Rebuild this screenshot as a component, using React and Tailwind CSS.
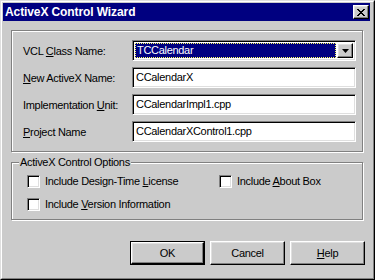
const FONT = { fontFamily: '"Liberation Sans", Arial, sans-serif' };

const SUNKEN =
  "border border-t-[#808080] border-l-[#808080] border-b-white border-r-white shadow-[inset_1px_1px_0_#000,inset_-1px_-1px_0_#dfdfdf]";
const RAISED =
  "border border-t-white border-l-white border-b-black border-r-black shadow-[inset_-1px_-1px_0_#808080,inset_1px_1px_0_#dfdfdf]";
const ETCHED =
  "border border-[#808080] shadow-[inset_1px_1px_0_#fff,1px_1px_0_#fff]";

const FIELDS = [
  { pre: "", key: "N", rest: "ew ActiveX Name:", value: "CCalendarX" },
  { pre: "Implementation ", key: "U", rest: "nit:", value: "CCalendarImpl1.cpp" },
  { pre: "", key: "P", rest: "roject Name", value: "CCalendarXControl1.cpp" },
];

function Label({ children }) {
  return <div className="w-[109px] shrink-0 whitespace-nowrap pt-[2px]">{children}</div>;
}

function Check({ children }) {
  return (
    <div className="flex items-center gap-[5px] leading-[13px]">
      <div className={`h-[13px] w-[13px] bg-white ${SUNKEN}`} />
      <span>{children}</span>
    </div>
  );
}

function Btn({ def, children }) {
  if (def)
    return (
      <div className="h-[24px] w-[75px] border border-black">
        <div className={`flex h-full items-center justify-center ${RAISED}`}>{children}</div>
      </div>
    );
  return (
    <div className={`flex h-[24px] w-[75px] items-center justify-center ${RAISED}`}>
      {children}
    </div>
  );
}

export default function App() {
  return (
    <div
      style={FONT}
      className="h-[280px] w-[375px] border border-t-[#dfdfdf] border-l-[#dfdfdf] border-r-black border-b-black text-[11px] tracking-[-0.3px] text-black"
    >
      <div className="flex h-full flex-col border border-t-white border-l-white border-r-[#808080] border-b-[#808080] bg-[#cbcbcb] p-[1px]">
        {/* title */}
        <div className="mr-[2px] flex h-[18px] items-center justify-between bg-[#000080] pl-[2px] pr-[1px]">
          <span className="text-[12px] font-bold tracking-[-0.1px] text-white">ActiveX Control Wizard</span>
          <div className={`flex h-[14px] w-[16px] items-center justify-center bg-[#cbcbcb] ${RAISED}`}>
            <svg width="8" height="7" viewBox="0 0 8 7">
              <path d="M0 0h2v1h1v1h2V1h1V0h2v1H7v1H6v1H5v1h1v1h1v1h1v1H6V6H5V5H3v1H2v1H0V6h1V5h1V4h1V3H2V2H1V1H0z" fill="#000" />
            </svg>
          </div>
        </div>

        {/* class / names group */}
        <div className={`ml-[8px] mt-[9px] w-[352px] pl-[11px] pt-[9px] pb-[9px] ${ETCHED}`}>
          <div className="flex h-[21px] items-center">
            <Label>
              VCL <u>C</u>lass Name:
            </Label>
            <div className={`flex h-[21px] w-[224px] p-[2px] ${SUNKEN} bg-white`}>
              <div className="flex flex-1 items-center border border-dotted border-[#ffff60] bg-[#000080] pl-[1px] text-white">
                TCCalendar
              </div>
              <div className={`ml-[1px] flex w-[16px] items-center justify-center bg-[#cbcbcb] ${RAISED}`}>
                <svg width="7" height="4" viewBox="0 0 7 4">
                  <path d="M0 0h7L3.5 4z" fill="#000" />
                </svg>
              </div>
            </div>
          </div>
          {FIELDS.map((f) => (
            <div key={f.value} className="mt-[6px] flex h-[21px] items-center">
              <Label>
                {f.pre}
                <u>{f.key}</u>
                {f.rest}
              </Label>
              <div className={`flex h-[21px] w-[224px] items-center bg-white pl-[3px] ${SUNKEN}`}>
                {f.value}
              </div>
            </div>
          ))}
        </div>

        {/* options group */}
        <div className={`relative ml-[8px] mt-[10px] w-[352px] pl-[15px] pt-[12px] pb-[8px] ${ETCHED}`}>
          <span className="absolute -top-[8px] left-[7px] bg-[#cbcbcb] px-[1px] leading-[14px]">ActiveX Control Options</span>
          <div className="flex">
            <div className="w-[192px]">
              <Check>
                Include Design-Time <u>L</u>icense
              </Check>
            </div>
            <Check>
              Include <u>A</u>bout Box
            </Check>
          </div>
          <div className="mt-[10px]">
            <Check>
              Include <u>V</u>ersion Information
            </Check>
          </div>
        </div>

        {/* buttons */}
        <div className="mt-[21px] flex justify-end gap-[5px] pr-[7px]">
          <Btn def>OK</Btn>
          <Btn>Cancel</Btn>
          <Btn>
            <span>
              <u>H</u>elp
            </span>
          </Btn>
        </div>
      </div>
    </div>
  );
}
